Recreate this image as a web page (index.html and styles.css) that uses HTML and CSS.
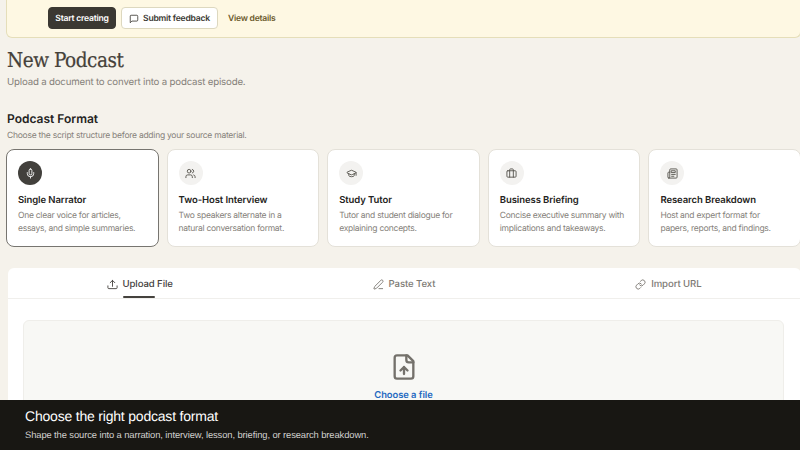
FILE: index.html
```html
<!DOCTYPE html>
<html lang="en">
<head>
	<meta charset="UTF-8"/>
	<title>New Podcast</title>
	<link rel="stylesheet" href="styles.css">
</head>
<body>
	<main class="page">
		<div class="banner">
			<button class="btn btn-dark">Start creating</button>
			<button class="btn btn-light">
				<svg class="icon" viewBox="0 0 24 24"><path d="M21 15a2 2 0 0 1-2 2H7l-4 4V5a2 2 0 0 1 2-2h14a2 2 0 0 1 2 2z"/></svg>
				Submit feedback
			</button>
			<a class="details">View details</a>
		</div>

		<h1>New Podcast</h1>
		<p class="lead">Upload a document to convert into a podcast episode.</p>

		<h2>Podcast Format</h2>
		<p class="hint">Choose the script structure before adding your source material.</p>

		<div class="formats">
			<div class="card selected">
				<span class="circle"><svg class="icon" viewBox="0 0 24 24"><path d="M12 2a3 3 0 0 0-3 3v7a3 3 0 0 0 6 0V5a3 3 0 0 0-3-3z"/><path d="M19 10v2a7 7 0 0 1-14 0v-2M12 19v3"/></svg></span>
				<h3>Single Narrator</h3>
				<p>One clear voice for articles,<br>essays, and simple summaries.</p>
			</div>
			<div class="card">
				<span class="circle"><svg class="icon" viewBox="0 0 24 24"><path d="M16 21v-2a4 4 0 0 0-4-4H6a4 4 0 0 0-4 4v2"/><circle cx="9" cy="7" r="4"/><path d="M22 21v-2a4 4 0 0 0-3-3.870M16 3.130a4 4 0 0 1 0 7.750"/></svg></span>
				<h3>Two-Host Interview</h3>
				<p>Two speakers alternate in a<br>natural conversation format.</p>
			</div>
			<div class="card">
				<span class="circle"><svg class="icon" viewBox="0 0 24 24"><path d="M21.420 10.920a1 1 0 0 0-.02-1.840L12.830 5.180a2 2 0 0 0-1.660 0L2.600 9.080a1 1 0 0 0 0 1.830l8.570 3.910a2 2 0 0 0 1.660 0z"/><path d="M22 10v6M6 12.500V16a6 3 0 0 0 12 0v-3.500"/></svg></span>
				<h3>Study Tutor</h3>
				<p>Tutor and student dialogue for<br>explaining concepts.</p>
			</div>
			<div class="card">
				<span class="circle"><svg class="icon" viewBox="0 0 24 24"><path d="M16 20V4a2 2 0 0 0-2-2h-4a2 2 0 0 0-2 2v16"/><rect x="2" y="6" width="20" height="14" rx="2"/></svg></span>
				<h3>Business Briefing</h3>
				<p>Concise executive summary with<br>implications and takeaways.</p>
			</div>
			<div class="card">
				<span class="circle"><svg class="icon" viewBox="0 0 24 24"><path d="M4 22h16a2 2 0 0 0 2-2V4a2 2 0 0 0-2-2H8a2 2 0 0 0-2 2v16a2 2 0 0 1-2 2zm0 0a2 2 0 0 1-2-2v-9a2 2 0 0 1 2-2h2"/><path d="M18 14h-8M15 18h-5M10 6h8v4h-8z"/></svg></span>
				<h3>Research Breakdown</h3>
				<p>Host and expert format for<br>papers, reports, and findings.</p>
			</div>
		</div>

		<div class="source">
			<div class="tabs">
				<div class="tab active">
					<svg class="icon" viewBox="0 0 24 24"><path d="M12 16V3M7 8l5-5 5 5M2 15v4a2 2 0 0 0 2 2h16a2 2 0 0 0 2-2v-4"/></svg>
					Upload File
				</div>
				<div class="tab">
					<svg class="icon" viewBox="0 0 24 24"><path d="M13 21h8"/><path d="M21.170 6.810a1 1 0 0 0-3.980-3.980L3.840 16.170a2 2 0 0 0-.5.830l-1.320 4.350a.5.5 0 0 0 .62.620l4.350-1.320a2 2 0 0 0 .83-.5z"/></svg>
					Paste Text
				</div>
				<div class="tab">
					<svg class="icon" viewBox="0 0 24 24"><path d="M10 13a5 5 0 0 0 7.540.540l3-3a5 5 0 0 0-7.070-7.070l-1.720 1.710"/><path d="M14 11a5 5 0 0 0-7.540-.540l-3 3a5 5 0 0 0 7.070 7.070l1.710-1.710"/></svg>
					Import URL
				</div>
			</div>
			<div class="dropzone">
				<svg class="icon" viewBox="0 0 24 24"><path d="M15 2H6a2 2 0 0 0-2 2v16a2 2 0 0 0 2 2h12a2 2 0 0 0 2-2V7z"/><path d="M14 2v4a2 2 0 0 0 2 2h4M12 18v-6M9 15l3-3 3 3"/></svg>
				<a class="choose">Choose a file</a>
			</div>
		</div>
	</main>

	<footer class="caption">
		<p class="caption-title">Choose the right podcast format</p>
		<p class="caption-text">Shape the source into a narration, interview, lesson, briefing, or research breakdown.</p>
	</footer>
</body>
</html>
```
FILE: styles.css
```css
* { margin: 0; padding: 0; box-sizing: border-box; }
body {
	display: flex;
	flex-direction: column;
	width: 800px;
	height: 450px;
	overflow: hidden;
	background-color: #f5f2eb;
	color: #242321;
	font-family: Inter, "Liberation Sans", sans-serif;
	text-rendering: geometricPrecision;
}
.page {
	height: 400px;
	width: 801px;
	padding-left: 6px;
	overflow: hidden;
	flex-shrink: 0;
}
.icon {
	fill: none;
	stroke: currentColor;
	stroke-width: 2;
	stroke-linecap: round;
	stroke-linejoin: round;
	flex-shrink: 0;
}

/* banner */
.banner {
	display: flex;
	align-items: flex-start;
	height: 38px;
	padding: 7px 0 0 41px;
	border: 1px solid #e5deb9;
	border-top: none;
	border-radius: 0 0 6px 6px;
	background-color: #fef8e3;
}
.btn {
	display: flex;
	align-items: center;
	justify-content: center;
	height: 22px;
	padding-top: 1px;
	border: 1px solid #ddd8bf;
	border-radius: 4px;
	font: 600 8.6px Inter, sans-serif;
	letter-spacing: -0.23px;
	text-rendering: geometricPrecision;
	white-space: nowrap;
}
.btn-dark {
	width: 68px;
	margin-right: 5px;
	border-color: #3b3832;
	background-color: #3b3832;
	color: #fff;
}
.btn-light {
	width: 97px;
	gap: 4px;
	background-color: #fff;
	color: #3b3832;
}
.btn .icon { width: 10px; height: 10px; }
.details {
	margin-left: 10px;
	color: #6b5a2c;
	font-size: 8.6px;
	font-weight: 600;
	letter-spacing: -0.25px;
	line-height: 24px;
}

/* headings */
h1 {
	height: 30px;
	margin-top: 7px;
	padding-left: 1px;
	color: #45413a;
	font-family: "DejaVu Serif Condensed", "DejaVu Serif", serif;
	font-size: 20.5px;
	font-stretch: condensed;
	font-weight: 400;
	letter-spacing: -0.45px;
	line-height: 30px;
	-webkit-text-stroke: 0.2px #45413a;
}
.lead {
	padding-left: 1px;
	color: #85817a;
	font-size: 9.7px;
	letter-spacing: -0.19px;
	line-height: 15px;
}
h2 {
	margin-top: 20px;
	padding-left: 1px;
	font-size: 12px;
	font-weight: 600;
	line-height: 18px;
}
.hint {
	padding-left: 1px;
	color: #85817a;
	font-size: 8.5px;
	letter-spacing: -0.25px;
	line-height: 17px;
}

/* format cards */
.formats {
	display: grid;
	grid-template-columns: repeat(5, 1fr);
	gap: 8px;
	margin-top: 4px;
}
.card {
	height: 98px;
	padding: 11px 0 0 11px;
	border: 1px solid #e4e1d9;
	border-radius: 8px;
	background-color: #fff;
	white-space: nowrap;
}
.card.selected { border-color: #777570; }
.circle {
	display: flex;
	align-items: center;
	justify-content: center;
	width: 24px;
	height: 24px;
	border-radius: 50%;
	background-color: #f3f2f0;
	color: #57544e;
}
.circle .icon { width: 11px; height: 11px; }
.selected .circle { background-color: #42403c; color: #fff; }
h3 {
	margin-top: 8px;
	font-size: 9.5px;
	font-weight: 600;
	letter-spacing: -0.08px;
	line-height: 16px;
}
.card p {
	margin-top: 1px;
	color: #85817a;
	font-size: 8.5px;
	letter-spacing: -0.27px;
	line-height: 13px;
}

/* source panel */
.source {
	height: 200px;
	margin: 21px 0 0 2px;
	border-radius: 6px 6px 0 0;
	background-color: #fff;
}
.tabs {
	display: grid;
	grid-template-columns: repeat(3, 1fr);
	border-bottom: 1px solid #f0efec;
}
.tab {
	display: flex;
	align-items: center;
	justify-content: center;
	gap: 5px;
	height: 30px;
	padding: 2px 1px 0 0;
	color: #7d7a74;
	font-size: 9.6px;
	font-weight: 500;
	letter-spacing: -0.1px;
}
.tab .icon { width: 11px; height: 11px; }
.tab.active { position: relative; color: #45423e; }
.tab.active::after {
	content: "";
	position: absolute;
	left: 50%;
	bottom: 0;
	width: 32px;
	height: 2px;
	margin-left: -17px;
	border-radius: 1px;
	background-color: #45423e;
}
.dropzone {
	display: flex;
	flex-direction: column;
	align-items: center;
	height: 180px;
	margin: 21px 17px 0 15px;
	padding-top: 32px;
	border: 1px solid #efeeea;
	border-radius: 6px;
	background-color: #f8f8f5;
	color: #74716b;
}
.dropzone .icon { width: 28px; height: 28px; }
.choose {
	margin-top: 7px;
	color: #1f69c1;
	font-size: 9.4px;
	font-weight: 600;
	letter-spacing: -0.05px;
	line-height: 15px;
}

/* caption bar */
.caption {
	flex: 1;
	padding: 7px 0 0 25px;
	background-color: #181713;
	color: #fff;
	font-family: "Liberation Sans", Arial, sans-serif;
}
.caption-title { font-size: 14px; letter-spacing: -0.2px; line-height: 18px; }
.caption-text {
	margin-top: 3px;
	color: #d2d1cf;
	font-size: 9.4px;
	letter-spacing: -0.1px;
	line-height: 14px;
}
```
